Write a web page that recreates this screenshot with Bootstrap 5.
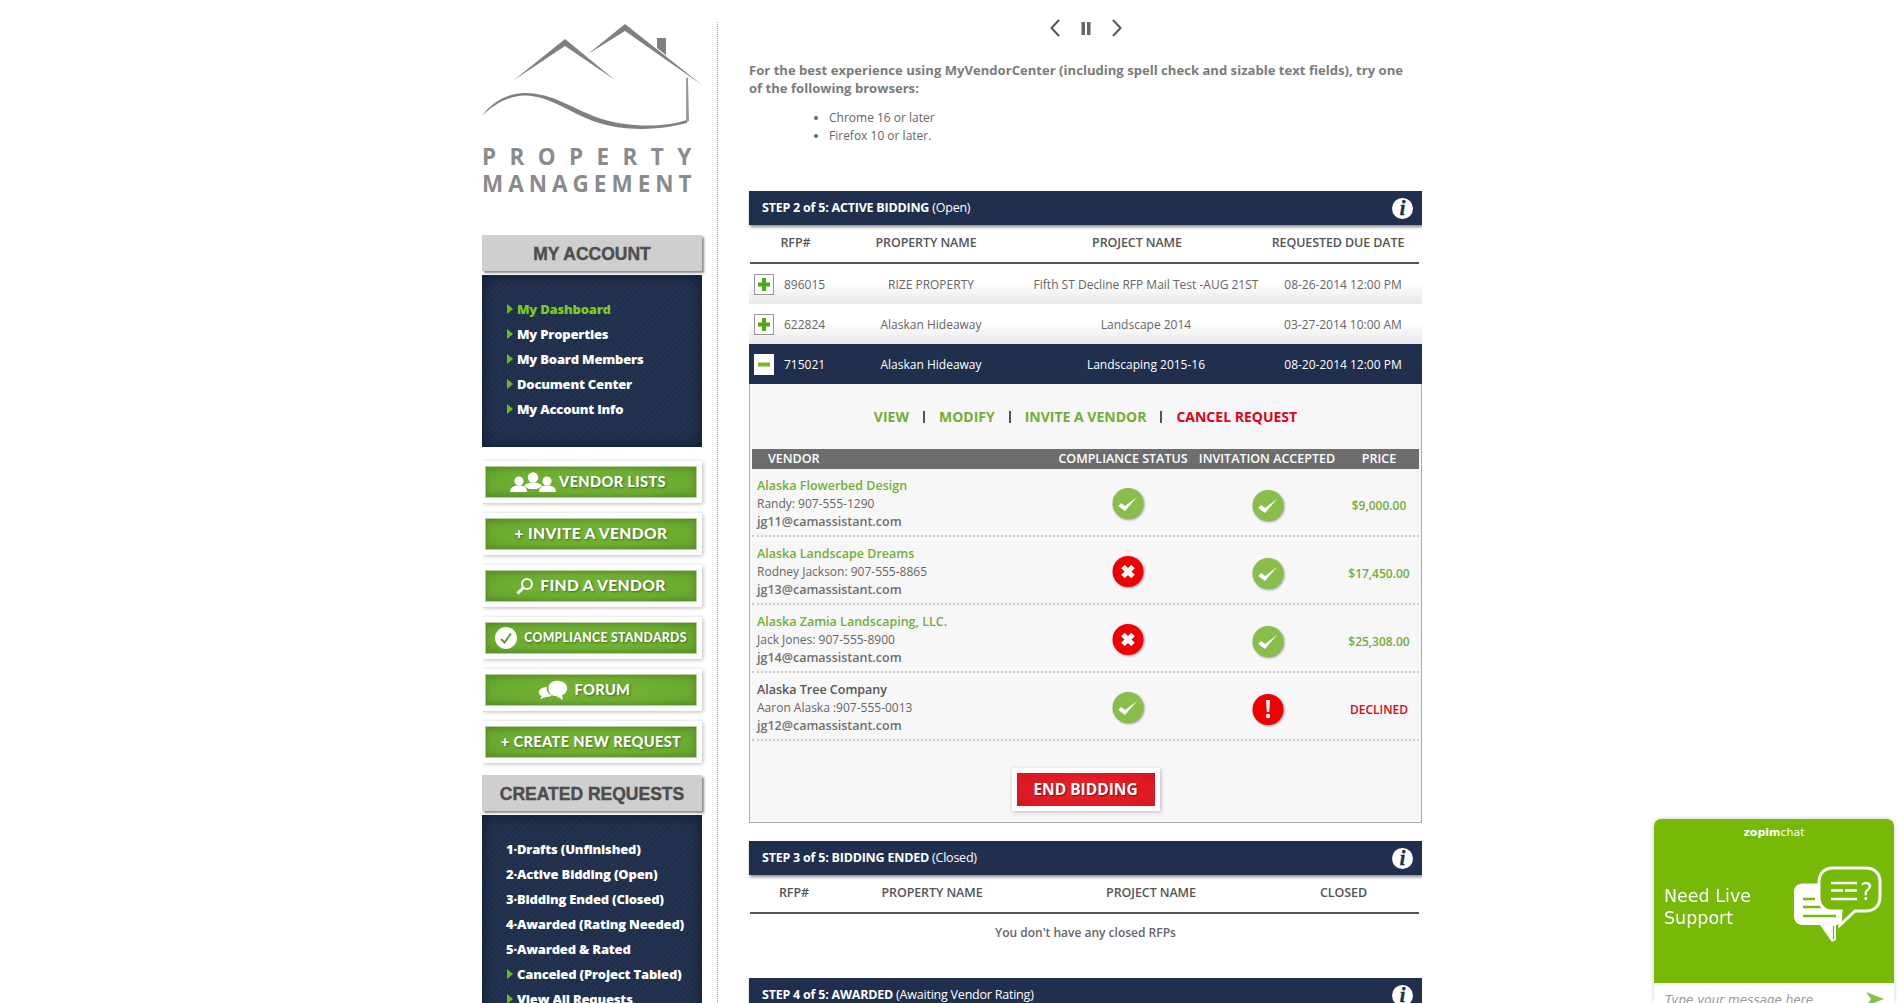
<!DOCTYPE html>
<html lang="en">
<head>
  <meta charset="UTF-8">
  <title>MyVendorCenter</title>
  <link href="https://cdn.jsdelivr.net/npm/bootstrap@5.3.0/dist/css/bootstrap.min.css" rel="stylesheet">
  <style>
    html, body { height: 100%; overflow: hidden; }
    body { background: #fff; color: #666; font-family: "Open Sans", sans-serif; font-size: 12px; }
    .page-wrap { width: 940px; margin: 0 auto; height: 100vh; overflow: hidden; }

    /* sidebar */
    .side-col { width: 221px; flex: none; }
    .logo-box { height: 235px; position: relative; }
    .logo-box svg { display: block; }
    .logo-text { position: absolute; left: 0; color: #8a8b8d; font-weight: 700; font-size: 22.5px; line-height: 24px; white-space: nowrap; }
    .logo-one { top: 145px; letter-spacing: 13.4px; }
    .logo-two { top: 172px; letter-spacing: 5px; }
    .side-title { width: 220px; background: #cfcfcf; color: #4d4d4d; font-family: "Liberation Sans", sans-serif; font-weight: 700; font-size: 17.5px; height: 36px; line-height: 38px; text-align: center; box-shadow: 2px 2px 2px #8a8a8a; -webkit-text-stroke: .4px #4d4d4d; }
    .side-panel { width: 220px; margin-top: 4px; background: repeating-linear-gradient(135deg, #1f2e4d 0 2px, #24344f 2px 4px); box-shadow: inset 0 0 14px #0f1a30; padding: 22px 0 25px 24px; }
    .side-panel ul { margin: 0; }
    .side-panel li { height: 25px; line-height: 25px; font-size: 13px; font-weight: 800; color: #fff; white-space: nowrap; letter-spacing: -.2px; }
    .side-panel li.arrow { padding-left: 11px; position: relative; }
    .side-panel li.arrow::before { content: ""; position: absolute; left: 1px; top: 7px; border-left: 6px solid #6fb823; border-top: 5px solid transparent; border-bottom: 5px solid transparent; }
    .side-panel li.now { color: #7ccb1e; }
    .green-stack { margin: 14px 0 12px; gap: 10px; }
    .green-btn { height: 42px; width: 220px; background: #fff; box-shadow: 1px 1px 4px #bbb; padding: 5px 5px 5px 3px; border-radius: 0; border: 0; }
    .green-btn span.inner { height: 100%; width: 100%; gap: 3px; border: 1px solid #b9cfa2; background: radial-gradient(ellipse at center, #76b534 0%, #6bab2f 65%, #5c9a29 100%); box-shadow: inset 0 0 5px #4d8520; color: #fff; font-family: "Lato", sans-serif; font-weight: 900; font-size: 14.6px; letter-spacing: .35px; text-shadow: 1px 1px 2px #3f6d1c; white-space: nowrap; }
    .green-btn span.smaller { font-size: 12.2px; gap: 7px; }
    .green-btn span.wider { font-size: 15.6px; gap: 6px; }
    .green-btn span.pad-one { padding-right: 6px; }
    .green-btn span.pad-two { padding-right: 14px; }

    /* main column */
    .rule-col { width: 46px; flex: none; position: relative; }
    .rule-col::before { content: ""; position: absolute; left: 14px; top: 22px; bottom: 0; border-left: 1px dotted #aaa; }
    .main-col { width: 673px; flex: none; }
    .pager-row { height: 56px; padding-top: 19px; gap: 20px; }
    .note-bold { font-size: 13.1px; line-height: 18px; font-weight: 700; color: #7b7b7b; margin: 5px 0 12px; padding-right: 16px; }
    .note-list { margin: 0 0 46px; padding-left: 80px; line-height: 18px; font-size: 12px; color: #666; }
    .step-bar { height: 34px; background: #1f2f4d; color: #fff; font-size: 12.5px; padding: 0 9px 0 13px; box-shadow: 1px 2px 3px #888; letter-spacing: -.22px; }
    .step-bar b { font-weight: 700; }
    .step-gap { margin-top: 18px; }
    .info-dot { width: 21px; height: 21px; border-radius: 50%; background: #fff; color: #1f2f4d; font-family: "Liberation Serif", serif; font-style: italic; font-weight: 700; font-size: 20px; line-height: 21px; text-align: center; letter-spacing: 0; -webkit-text-stroke: .5px #1f2f4d; }
    .head-row { height: 39px; margin: 0 3px 0 1px; border-bottom: 2px solid #555; color: #555; font-weight: 600; font-size: 12.5px; letter-spacing: -.1px; }
    .head-row > div, .rfp-row > div { text-align: center; white-space: nowrap; }
    .rfp-row { height: 40px; padding-top: 2px; font-size: 12px; color: #666; background: linear-gradient(#fff 45%, #e9e9e9 100%); }
    .rfp-row.open-row { background: #1f2f4d; color: #fff; }
    .w-a { width: 91px; } .w-b { width: 170px; } .w-c { width: 252px; } .w-d { width: 150px; }
    .r-a { width: 92px; text-align: left !important; padding-left: 5px; gap: 10px; } .r-b { width: 180px; } .r-c { width: 250px; } .r-d { width: 144px; }
    .c-a { width: 88px; } .c-b { width: 170px; margin-left: 9px; } .c-c { width: 260px; margin-left: 4px; } .c-d { width: 125px; }
    .plus-box { width: 20px; height: 21px; margin-top: -2px; background: #fff; border: 1px solid #999; flex: none; }
    .open-row .plus-box { border-color: #fff; }
    .detail-box { height: 439px; background: #f7f7f7; border: 1px solid #aaa; border-top: 0; }
    .action-row { height: 65px; font-size: 14px; font-weight: 700; gap: 14px; }
    .action-row a { text-decoration: none; color: #74ad35; }
    .action-row a.stop { color: #e2001a; }
    .action-row i { width: 2px; height: 12px; background: #555; }
    .vend-head { height: 20px; margin: 0 2px; background: #6d6d6d; color: #fff; font-size: 12.5px; font-weight: 600; letter-spacing: 0; }
    .vend-row { height: 68px; margin: 0 2px; padding-top: 7px; border-bottom: 2px dotted #ccc; }
    .v-a { width: 299px; flex: none; } .v-b, .v-c { width: 144px; flex: none; text-align: center; white-space: nowrap; } .v-d { width: 80px; flex: none; text-align: center; white-space: nowrap; }
    .vend-info { padding: 1px 0 0 5px; font-size: 12px; line-height: 18px; color: #666; }
    .vend-info b { display: block; font-size: 12.5px; font-weight: 600; color: #74ad35; }
    .vend-info b.plain { color: #555; }
    .vend-info span { display: block; font-size: 12.5px; font-weight: 600; color: #6f6f6f; }
    .price-txt { color: #74ad35; font-weight: 600; }
    .price-txt.no { color: #e2001a; }
    .stat-ico { display: block; margin: 0 auto; filter: drop-shadow(1px 1px 1px #999); position: relative; left: 1px; }
    .stat-ico.hi { top: -2px; left: 5px; }
    .end-outer { display: block; width: 148px; height: 43px; margin: 27px auto 0; padding: 5px; background: #fff; box-shadow: 1px 1px 4px #bbb; border: 0; border-radius: 0; }
    .end-outer span { display: block; height: 100%; line-height: 33px; background: radial-gradient(ellipse at center, #e8242c, #d9141e); color: #fff; font-weight: 700; font-size: 15.5px; text-shadow: 1px 1px 1px #7a0d12; letter-spacing: 0; }
    .none-row { height: 64px; padding-top: 9px; line-height: 20px; text-align: center; font-weight: 600; color: #666; }

    /* chat widget */
    .chat-box { position: fixed; left: 1654px; top: 819px; width: 240px; height: 184px; border-radius: 7px 7px 0 0; overflow: hidden; box-shadow: 0 0 4px #ccc; }
    .chat-green { height: 164px; background: #76b907; color: #fff; position: relative; }
    .chat-brand { text-align: center; padding-top: 6px; font-family: "DejaVu Sans", sans-serif; font-size: 11px; line-height: 16px; }
    .chat-brand b { font-weight: 700; }
    .chat-brand span { font-weight: 400; }
    .chat-need { position: absolute; left: 10px; top: 66px; font-family: "DejaVu Sans", sans-serif; font-size: 17.5px; line-height: 22px; }
    .chat-pic { position: absolute; left: 140px; top: 47px; }
    .chat-input { height: 20px; background: #fff; padding-left: 11px; font-style: italic; font-size: 12px; color: #999; font-family: "DejaVu Sans", sans-serif; line-height: 35px; position: relative; white-space: nowrap; }
    .chat-input svg { position: absolute; left: 212px; top: 9px; }
  </style>
</head>
<body>
  <div class="page-wrap d-flex">
    <!-- Sidebar -->
    <div class="side-col">
      <div class="logo-box">
        <svg width="222" height="140" viewBox="0 0 222 140" fill="none">
          <path d="M83 39 L32 80 L83 46 L133 80 Z" fill="#7f8083"/>
          <path d="M106 54 L143 24 L220 85 L143 31 Z" fill="#7f8083"/>
          <path d="M175 38 H184 V55 L175 48 Z" fill="#7f8083"/>
          <path d="M204 78 L206 78 L207 121 L204 122 Z" fill="#9a9b9d"/>
          <path d="M0 116 C12 100 28 93 43 93 C72 93 92 110 120 119 C145 127 180 128 205 120 L205 123 C175 131 140 131 114 122 C88 113 68 96 43 95.5 C26 96 12 104 0 116 Z" fill="#7f8083"/>
        </svg>
        <div class="logo-text logo-one">PROPERTY</div>
        <div class="logo-text logo-two">MANAGEMENT</div>
      </div>
      <div class="side-title">MY ACCOUNT</div>
      <div class="side-panel">
        <ul class="list-unstyled">
          <li class="arrow now">My Dashboard</li>
          <li class="arrow">My Properties</li>
          <li class="arrow">My Board Members</li>
          <li class="arrow">Document Center</li>
          <li class="arrow">My Account Info</li>
        </ul>
      </div>
      <div class="green-stack d-flex flex-column">
        <button class="btn green-btn"><span class="inner pad-one d-flex align-items-center justify-content-center">
          <svg width="46" height="21" viewBox="0 0 46 21" fill="#fff"><circle cx="9" cy="9" r="4.6"/><path d="M0 20 C0 15 4 13.5 9 13.5 C14 13.5 17 15 17 20 Z"/><circle cx="23" cy="5.500" r="5.200"/><path d="M14 14 C16 11 19 10.500 23 10.500 C27 10.500 30 11 32 14 L27 17 H19 Z"/><circle cx="37" cy="9" r="4.6"/><path d="M29 20 C29 15 32 13.500 37 13.500 C42 13.500 46 15 46 20 Z"/></svg>
          VENDOR LISTS</span></button>
        <button class="btn green-btn"><span class="inner wider d-flex align-items-center justify-content-center">+ INVITE A VENDOR</span></button>
        <button class="btn green-btn"><span class="inner wider d-flex align-items-center justify-content-center">
          <svg width="18" height="18" viewBox="0 0 18 18" fill="none" stroke="#fff"><circle cx="11" cy="7" r="5" stroke-width="2"/><path d="M7 11 L1.5 16.5" stroke-width="3"/></svg>
          FIND A VENDOR</span></button>
        <button class="btn green-btn"><span class="inner smaller d-flex align-items-center justify-content-center">
          <svg width="22" height="22" viewBox="0 0 22 22"><circle cx="11" cy="11" r="11" fill="#fff"/><path d="M6 12 L9.5 15.5 L16 6.5" stroke="#5a9a2a" stroke-width="2" fill="none"/></svg>
          COMPLIANCE STANDARDS</span></button>
        <button class="btn green-btn"><span class="inner pad-two d-flex align-items-center justify-content-center">
          <svg width="30" height="20" viewBox="0 0 30 20" fill="#fff"><path d="M11 5 C13 1 18 0 22 1 C28 2 31 8 28 12 C27 14 25 15 24 15 L25 20 L18 16 C13 16 9 12 11 5 Z"/><path d="M9 7 C4 7 0 10 1 13 C1 15 3 16 4 16 L2 19 L8 17 C11 17 13 16 14 15 C10 14 8 11 9 7 Z"/></svg>
          &nbsp;FORUM</span></button>
        <button class="btn green-btn"><span class="inner d-flex align-items-center justify-content-center">+ CREATE NEW REQUEST</span></button>
      </div>
      <div class="side-title">CREATED REQUESTS</div>
      <div class="side-panel">
        <ul class="list-unstyled">
          <li>1·Drafts (Unfinished)</li>
          <li>2·Active Bidding (Open)</li>
          <li>3·Bidding Ended (Closed)</li>
          <li>4·Awarded (Rating Needed)</li>
          <li>5·Awarded &amp; Rated</li>
          <li class="arrow">Canceled (Project Tabled)</li>
          <li class="arrow">View All Requests</li>
        </ul>
      </div>
    </div>

    <div class="rule-col"></div>

    <!-- Main column -->
    <div class="main-col">
      <div class="pager-row d-flex justify-content-center">
        <svg width="12" height="18" viewBox="0 0 12 18" fill="none" stroke="#555" stroke-width="2"><path d="M10 1 L2.500 9 L10 17"/></svg>
        <svg width="10" height="18" viewBox="0 0 10 18" fill="#666"><rect x="0.5" y="3" width="3.5" height="13"/><rect x="6" y="3" width="3.5" height="13"/></svg>
        <svg width="12" height="18" viewBox="0 0 12 18" fill="none" stroke="#555" stroke-width="2"><path d="M2 1 L9.500 9 L2 17"/></svg>
      </div>
      <p class="note-bold">For the best experience using MyVendorCenter (including spell check and sizable text fields), try one of the following browsers:</p>
      <ul class="note-list">
        <li>Chrome 16 or later</li>
        <li>Firefox 10 or later.</li>
      </ul>

      <div class="step-bar d-flex align-items-center justify-content-between">
        <div><b>STEP 2 of 5: ACTIVE BIDDING</b> (Open)</div>
        <div class="info-dot">i</div>
      </div>
      <div class="head-row d-flex align-items-center">
        <div class="w-a">RFP#</div><div class="w-b">PROPERTY NAME</div><div class="w-c">PROJECT NAME</div><div class="w-d">REQUESTED DUE DATE</div>
      </div>
      <div class="rfp-row d-flex align-items-center">
        <div class="r-a d-flex align-items-center">
          <svg class="plus-box" viewBox="0 0 18 19"><path d="M7 3 H11 V7.500 H15 V11.500 H11 V16 H7 V11.500 H3 V7.500 H7 Z" fill="#4cab17"/></svg>
          896015</div>
        <div class="r-b">RIZE PROPERTY</div><div class="r-c">Fifth ST Decline RFP Mail Test -AUG 21ST</div><div class="r-d">08-26-2014 12:00 PM</div>
      </div>
      <div class="rfp-row d-flex align-items-center">
        <div class="r-a d-flex align-items-center">
          <svg class="plus-box" viewBox="0 0 18 19"><path d="M7 3 H11 V7.500 H15 V11.500 H11 V16 H7 V11.500 H3 V7.500 H7 Z" fill="#4cab17"/></svg>
          622824</div>
        <div class="r-b">Alaskan Hideaway</div><div class="r-c">Landscape 2014</div><div class="r-d">03-27-2014 10:00 AM</div>
      </div>
      <div class="rfp-row open-row d-flex align-items-center">
        <div class="r-a d-flex align-items-center">
          <svg class="plus-box" viewBox="0 0 18 19"><rect x="3" y="7.5" width="12" height="4" fill="#7fb52a"/></svg>
          715021</div>
        <div class="r-b">Alaskan Hideaway</div><div class="r-c">Landscaping 2015-16</div><div class="r-d">08-20-2014 12:00 PM</div>
      </div>

      <div class="detail-box">
        <div class="action-row d-flex align-items-center justify-content-center">
          <a href="#">VIEW</a><i></i><a href="#">MODIFY</a><i></i><a href="#">INVITE A VENDOR</a><i></i><a class="stop" href="#">CANCEL REQUEST</a>
        </div>
        <div class="vend-head d-flex align-items-center">
          <div class="v-a ps-3">VENDOR</div><div class="v-b">COMPLIANCE STATUS</div><div class="v-c">INVITATION ACCEPTED</div><div class="v-d">PRICE</div>
        </div>
        <div class="vend-row d-flex align-items-center">
          <div class="v-a vend-info align-self-start"><b>Alaska Flowerbed Design</b><div>Randy: 907-555-1290</div><span>jg11@camassistant.com</span></div>
          <div class="v-b"><svg class="stat-ico hi" width="32" height="31" viewBox="0 0 32 31"><circle cx="16" cy="15.5" r="15.5" fill="#88bf4a"/><path d="M6.3 18 L9 15 L13 18 L25 9 L13 23 Z" fill="#fff"/></svg></div>
          <div class="v-c"><svg class="stat-ico" width="32" height="31" viewBox="0 0 32 31"><circle cx="16" cy="15.5" r="15.5" fill="#88bf4a"/><path d="M6.3 18 L9 15 L13 18 L25 9 L13 23 Z" fill="#fff"/></svg></div>
          <div class="v-d price-txt">$9,000.00</div>
        </div>
        <div class="vend-row d-flex align-items-center">
          <div class="v-a vend-info align-self-start"><b>Alaska Landscape Dreams</b><div>Rodney Jackson: 907-555-8865</div><span>jg13@camassistant.com</span></div>
          <div class="v-b"><svg class="stat-ico hi" width="32" height="31" viewBox="0 0 32 31"><circle cx="16" cy="15.5" r="15.5" fill="#f00000"/><path d="M11 10.5 L21 20.5 M21 10.5 L11 20.5" stroke="#fff" stroke-width="5" fill="none"/></svg></div>
          <div class="v-c"><svg class="stat-ico" width="32" height="31" viewBox="0 0 32 31"><circle cx="16" cy="15.5" r="15.5" fill="#88bf4a"/><path d="M6.3 18 L9 15 L13 18 L25 9 L13 23 Z" fill="#fff"/></svg></div>
          <div class="v-d price-txt">$17,450.00</div>
        </div>
        <div class="vend-row d-flex align-items-center">
          <div class="v-a vend-info align-self-start"><b>Alaska Zamia Landscaping, LLC.</b><div>Jack Jones: 907-555-8900</div><span>jg14@camassistant.com</span></div>
          <div class="v-b"><svg class="stat-ico hi" width="32" height="31" viewBox="0 0 32 31"><circle cx="16" cy="15.5" r="15.5" fill="#f00000"/><path d="M11 10.5 L21 20.5 M21 10.5 L11 20.5" stroke="#fff" stroke-width="5" fill="none"/></svg></div>
          <div class="v-c"><svg class="stat-ico" width="32" height="31" viewBox="0 0 32 31"><circle cx="16" cy="15.5" r="15.5" fill="#88bf4a"/><path d="M6.3 18 L9 15 L13 18 L25 9 L13 23 Z" fill="#fff"/></svg></div>
          <div class="v-d price-txt">$25,308.00</div>
        </div>
        <div class="vend-row d-flex align-items-center">
          <div class="v-a vend-info align-self-start"><b class="plain">Alaska Tree Company</b><div>Aaron Alaska :907-555-0013</div><span>jg12@camassistant.com</span></div>
          <div class="v-b"><svg class="stat-ico hi" width="32" height="31" viewBox="0 0 32 31"><circle cx="16" cy="15.5" r="15.5" fill="#88bf4a"/><path d="M6.3 18 L9 15 L13 18 L25 9 L13 23 Z" fill="#fff"/></svg></div>
          <div class="v-c"><svg class="stat-ico" width="32" height="31" viewBox="0 0 32 31"><circle cx="16" cy="15.5" r="15.5" fill="#f00000"/><path d="M14 6 H18 L17.2 18 H14.8 Z" fill="#fff"/><circle cx="16" cy="22" r="2.2" fill="#fff"/></svg></div>
          <div class="v-d price-txt no">DECLINED</div>
        </div>
        <button class="btn end-outer"><span>END BIDDING</span></button>
      </div>

      <div class="step-bar step-gap d-flex align-items-center justify-content-between">
        <div><b>STEP 3 of 5: BIDDING ENDED</b> (Closed)</div>
        <div class="info-dot">i</div>
      </div>
      <div class="head-row d-flex align-items-center">
        <div class="c-a">RFP#</div><div class="c-b">PROPERTY NAME</div><div class="c-c">PROJECT NAME</div><div class="c-d">CLOSED</div>
      </div>
      <div class="none-row">You don't have any closed RFPs</div>

      <div class="step-bar d-flex align-items-center justify-content-between">
        <div><b>STEP 4 of 5: AWARDED</b> (Awaiting Vendor Rating)</div>
        <div class="info-dot">i</div>
      </div>
    </div>
  </div>

  <!-- Chat widget -->
  <div class="chat-box">
    <div class="chat-green">
      <div class="chat-brand"><b>zopim</b><span>chat</span></div>
      <div class="chat-need">Need Live<br>Support</div>
      <svg class="chat-pic" width="90" height="78" viewBox="0 0 90 78">
        <path d="M9 17.5 H40 C46 17.5 48 20 48 26 V50 C48 56 46 59 42 59 V74 L38 76 L26 59 H9 C3 59 0 55 0 50 V26 C0 21 3 17.5 9 17.5 Z" fill="#fff"/>
        <path d="M39.5 60 V73" stroke="#76b907" stroke-width="1.2"/>
        <path d="M9 33 H21 M9 41 H28 M9 50 H42" stroke="#76b907" stroke-width="2.5"/>
        <path d="M39 2 H72 C81 2 86 8 86 16 V31 C86 39 81 45 72 45 H61 L46 59 L47 45 H38 C30 45 25 39 25 31 V16 C25 8 30 2 39 2 Z" fill="#76b907" stroke="#fff" stroke-width="3"/>
        <path d="M37 17 H63 M37 24.5 H49 M51 24.5 H63 M37 33 H63" stroke="#fff" stroke-width="2.5"/>
        <text x="66" y="34" fill="#fff" font-family="DejaVu Sans, sans-serif" font-size="24">?</text>
      </svg>
    </div>
    <div class="chat-input">Type your message here
      <svg width="18" height="14" viewBox="0 0 18 14"><path d="M0 0 L18 7 L0 14 L5 7 Z" fill="#8abf45"/></svg>
    </div>
  </div>

  <script src="https://cdn.jsdelivr.net/npm/bootstrap@5.3.0/dist/js/bootstrap.bundle.min.js"></script>
</body>
</html>
